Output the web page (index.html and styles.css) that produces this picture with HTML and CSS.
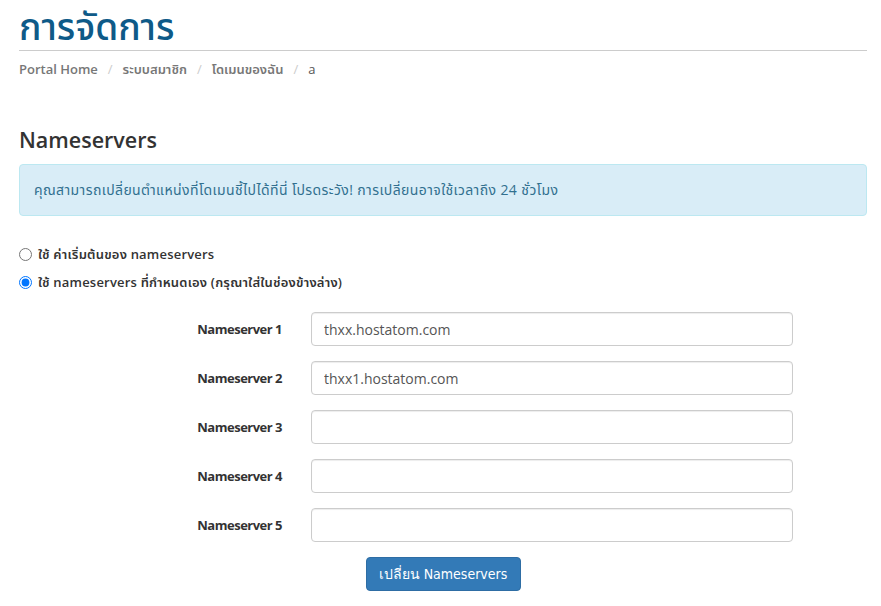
FILE: index.html
```html
<!DOCTYPE html>
<html lang="th">
<head>
<meta charset="utf-8">
<link rel="stylesheet" href="styles.css">
</head>
<body>
<div class="page">
  <div class="header">
    <h1 class="title">การจัดการ</h1>
  </div>
  <ol class="crumbs">
    <li><a>Portal Home</a></li>
    <li><a>ระบบสมาชิก</a></li>
    <li><a>โดเมนของฉัน</a></li>
    <li class="active">a</li>
  </ol>

  <h2 class="section">Nameservers</h2>
  <div class="alert">คุณสามารถเปลี่ยนตำแหน่งที่โดเมนชี้ไปได้ที่นี่ โปรดระวัง! การเปลี่ยนอาจใช้เวลาถึง 24 ชั่วโมง</div>

  <div class="radios">
    <label class="radio"><input type="radio" name="ns"> ใช้ ค่าเริ่มต้นของ nameservers</label>
    <label class="radio"><input type="radio" name="ns" checked> ใช้ nameservers ที่กำหนดเอง (กรุณาใส่ในช่องข้างล่าง)</label>
  </div>

  <div class="form">
    <label class="lbl">Nameserver 1</label><input class="field" type="text" value="thxx.hostatom.com">
    <label class="lbl">Nameserver 2</label><input class="field" type="text" value="thxx1.hostatom.com">
    <label class="lbl">Nameserver 3</label><input class="field" type="text" value="">
    <label class="lbl">Nameserver 4</label><input class="field" type="text" value="">
    <label class="lbl">Nameserver 5</label><input class="field" type="text" value="">
  </div>
  <div class="actions">
    <button class="btn">เปลี่ยน Nameservers</button>
  </div>
</div>
</body>
</html>
```

FILE: styles.css
```css
html, body {
  margin: 0;
  padding: 0;
  background: #fff;
}
body {
  font-family: "Open Sans", "Noto Sans", "Noto Sans Thai", sans-serif;
  font-size: 14px;
  color: #333;
}
.page {
  padding: 0 14px 0 19px;
}
.header {
  border-bottom: 1px solid #ccc;
}
.title {
  margin: 0;
  padding-top: 2px;
  font-size: 37px;
  line-height: 48px;
  font-weight: 500;
  color: #0e5a88;
}
.crumbs {
  list-style: none;
  margin: 0;
  padding: 8px 0 0;
  display: flex;
  font-size: 13px;
  line-height: 20px;
  font-weight: 600;
  color: #777;
}
.crumbs li + li::before {
  content: "/";
  color: #ccc;
  font-weight: 400;
  padding: 0 10px;
}
.crumbs a {
  color: #777;
}
.crumbs .active {
  color: #555;
  font-weight: 400;
}
.section {
  margin: 47px 0 0;
  font-size: 21.5px;
  line-height: 28px;
  font-weight: 600;
  color: #333;
}
.alert {
  margin-top: 10px;
  background: #d9edf7;
  border: 1px solid #bce8f1;
  border-radius: 4px;
  color: #31708f;
  font-size: 14px;
  letter-spacing: 0.4px;
  line-height: 20px;
  padding: 15px 14px;
}
.radios {
  margin-top: 28px;
  display: flex;
  flex-direction: column;
  gap: 8px;
}
.radio {
  display: flex;
  align-items: center;
  font-size: 13px;
  font-weight: 600;
  letter-spacing: 0.2px;
  line-height: 20px;
  color: #333;
}
.radio input {
  margin: 0 6px 0 0;
  width: 13px;
  height: 13px;
}
.form {
  margin-top: 20px;
  display: grid;
  grid-template-columns: 263px 482px;
  column-gap: 29px;
  row-gap: 15px;
  align-items: center;
}
.lbl {
  text-align: right;
  font-weight: 700;
  font-size: 13px;
  letter-spacing: -0.5px;
  color: #333;
}
.field {
  box-sizing: border-box;
  height: 34px;
  width: 100%;
  border: 1px solid #ccc;
  border-radius: 4px;
  padding: 6px 12px;
  font-family: "Open Sans", sans-serif;
  font-size: 14px;
  color: #555;
  box-shadow: inset 0 1px 1px rgba(0,0,0,0.075);
}
.actions {
  display: flex;
  justify-content: center;
  margin-top: 15px;
}
.btn {
  background: #337ab7;
  border: 1px solid #2e6da4;
  border-radius: 4px;
  color: #fff;
  font-family: "DejaVu Sans Condensed", "Noto Sans", sans-serif;
  font-stretch: condensed;
  font-size: 14px;
  white-space: nowrap;
  height: 34px;
  padding: 0 12px;
  min-width: 155px;
}
```
